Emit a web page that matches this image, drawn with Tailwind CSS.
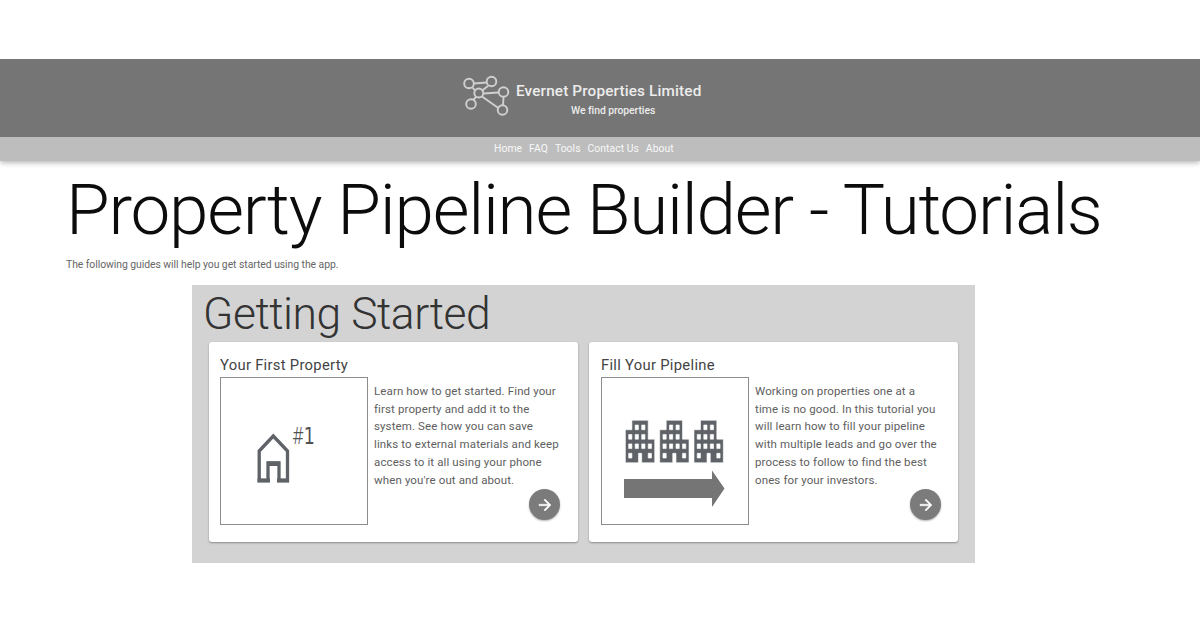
<!DOCTYPE html>
<html lang="en">
<head>
<meta charset="utf-8">
<title>Property Pipeline Builder - Tutorials</title>
<script src="https://cdn.jsdelivr.net/npm/@tailwindcss/browser@4"></script>
</head>
<body class="bg-white font-['Roboto',sans-serif] h-[630px] overflow-hidden pt-[59px]">
<header class="shadow-[0_2px_5px_rgba(0,0,0,0.28)] [clip-path:inset(0_0_-12px_0)]">
  <div class="h-[78px] bg-[#757575] flex text-[#ececec] pl-[462px]">
    <svg class="w-12 h-[42px] mt-4 shrink-0" viewBox="0 0 48 42" fill="none" stroke="#d0d0d0" stroke-width="1.900">
      <path d="M12 8.500 24.500 7.500M10.500 12.500 13.500 16M26 11 19.500 16M22 18.500 36 17.500M14 22 11 25M20 21.500 37 33.500M41.500 22 41 31"/>
      <circle cx="7" cy="8.500" r="4.800"/><circle cx="29.500" cy="6.500" r="4.800"/><circle cx="16.800" cy="18" r="4.500"/><circle cx="41.500" cy="17" r="4.800"/><circle cx="9" cy="29" r="4.800"/><circle cx="40.500" cy="35" r="4.800"/>
    </svg>
    <div class="ml-[6px] w-[194px] flex flex-col whitespace-nowrap pt-[22px]">
      <h1 class="text-[15.3px] leading-5 font-medium tracking-[0.15px]">Evernet Properties Limited</h1>
      <p class="text-[10.4px] leading-[14px] mt-[3px] ml-[55px] font-medium tracking-[-0.06px]">We find properties</p>
    </div>
  </div>
  <nav class="h-6 bg-[#bdbdbd] flex gap-[7px] pl-[494px] text-[10.4px] leading-[23px] text-[#f8f8f8] whitespace-nowrap tracking-[0.03px]">
    <a>Home</a><a>FAQ</a><a>Tools</a><a>Contact Us</a><a>About</a>
  </nav>
</header>
<main>
  <h2 class="pl-[66px] mt-[12px] text-[71px] leading-[74px] font-light tracking-[-1.23px] whitespace-nowrap text-[#0c0c0c]">Property Pipeline Builder - Tutorials</h2>
  <p class="pl-[66px] mt-[10px] text-[10.4px] leading-[16px] tracking-[-0.05px] text-[#666] whitespace-nowrap">The following guides will help you get started using the app.</p>
  <section class="ml-[192px] mt-[12px] w-[783px] h-[278px] bg-[#d3d3d3] px-[17px]">
    <h3 class="-ml-[6px] h-[57px] pt-1 text-[44.4px] leading-[50px] font-light tracking-[-0.45px] text-[#333] whitespace-nowrap">Getting Started</h3>
    <div class="flex gap-[11px]">
      <article class="w-[369px] h-[200px] rounded-[3px] bg-white shadow-[0_1px_2px_rgba(0,0,0,0.35)] pl-[11px] pr-[18px] pt-[13px]">
        <h4 class="text-[14.8px] leading-[20px] h-[22px] tracking-[0.29px] text-[#444]">Your First Property</h4>
        <div class="flex">
          <svg class="w-[148px] h-[148px] border border-[#8c8c8c] shrink-0" viewBox="221 378 146 146">
            <path d="M259.200 480.500V451L273.300 436 287.500 451V480.500H279V463H268V480.500Z" fill="none" stroke="#5f6368" stroke-width="3.300"/>
            <path d="M257.500 478.500H270V482.500H257.500ZM277 478.500H289V482.500H277ZM267 461.500H280V466H267Z" fill="#5f6368"/>
            <text transform="translate(292.500 444) scale(.74 1)" font-size="23.500" font-family="DejaVu Sans, sans-serif" fill="#505050"><tspan font-family="Noto Sans, sans-serif" font-weight="300">#</tspan>1</text>
          </svg>
          <div class="ml-[6px] mt-[6px] flex-1 flex flex-col">
            <p class="text-[11.5px] leading-[17.700px] tracking-[0.12px] text-[#606060] whitespace-nowrap">Learn how to get started. Find your<br>first property and add it to the<br>system. See how you can save<br>links to external materials and keep<br>access to it all using your phone<br>when you're out and about.</p>
            <div class="self-end w-[31px] h-[31px] rounded-full bg-[#7b7b7b] shadow-[0_1px_2px_rgba(0,0,0,0.3)] flex items-center justify-center">
              <svg class="w-[18px] h-[18px]" viewBox="0 0 24 24" fill="#fff"><path d="m12 4-1.410 1.410L16.170 11H4v2h12.170l-5.580 5.590L12 20l8-8z" stroke="#fff" stroke-width=".6"/></svg>
            </div>
          </div>
        </div>
      </article>
      <article class="w-[369px] h-[200px] rounded-[3px] bg-white shadow-[0_1px_2px_rgba(0,0,0,0.35)] pl-[12px] pr-[17px] pt-[13px]">
        <h4 class="text-[14.8px] leading-[20px] h-[22px] tracking-[0.29px] text-[#444]">Fill Your Pipeline</h4>
        <div class="flex">
          <svg class="w-[148px] h-[148px] border border-[#8c8c8c] shrink-0" viewBox="602 378 146 146">
            <defs><path id="tower" d="M17 11V3H7v4H3v14h8v-4h2v4h8V11h-4zM7 19H5v-2h2v2zm0-4H5v-2h2v2zm0-4H5V9h2v2zm4 4H9v-2h2v2zm0-4H9V9h2v2zm0-4H9V5h2v2zm4 8h-2v-2h2v2zm0-4h-2V9h2v2zm0-4h-2V5h2v2zm4 12h-2v-2h2v2zm0-4h-2v-2h2v2z"/></defs>
            <g fill="#5f6368" stroke="#fff" stroke-width=".3">
              <use href="#tower" transform="translate(620.500 413.200) scale(1.630 2.360)"/>
              <use href="#tower" transform="translate(654.800 413.200) scale(1.630 2.360)"/>
              <use href="#tower" transform="translate(689.100 413.200) scale(1.630 2.360)"/>
            </g>
            <path d="M624 479H712V470.500L724.500 488.500 712 507V498H624Z" fill="#757575"/>
          </svg>
          <div class="ml-[6px] mt-[6px] flex-1 flex flex-col">
            <p class="text-[11.5px] leading-[17.700px] tracking-[0.12px] text-[#606060] whitespace-nowrap">Working on properties one at a<br>time is no good. In this tutorial you<br>will learn how to fill your pipeline<br>with multiple leads and go over the<br>process to follow to find the best<br>ones for your investors.</p>
            <div class="self-end w-[31px] h-[31px] rounded-full bg-[#7b7b7b] shadow-[0_1px_2px_rgba(0,0,0,0.3)] flex items-center justify-center">
              <svg class="w-[18px] h-[18px]" viewBox="0 0 24 24" fill="#fff"><path d="m12 4-1.410 1.410L16.170 11H4v2h12.170l-5.580 5.590L12 20l8-8z" stroke="#fff" stroke-width=".6"/></svg>
            </div>
          </div>
        </div>
      </article>
    </div>
  </section>
</main>
</body>
</html>
